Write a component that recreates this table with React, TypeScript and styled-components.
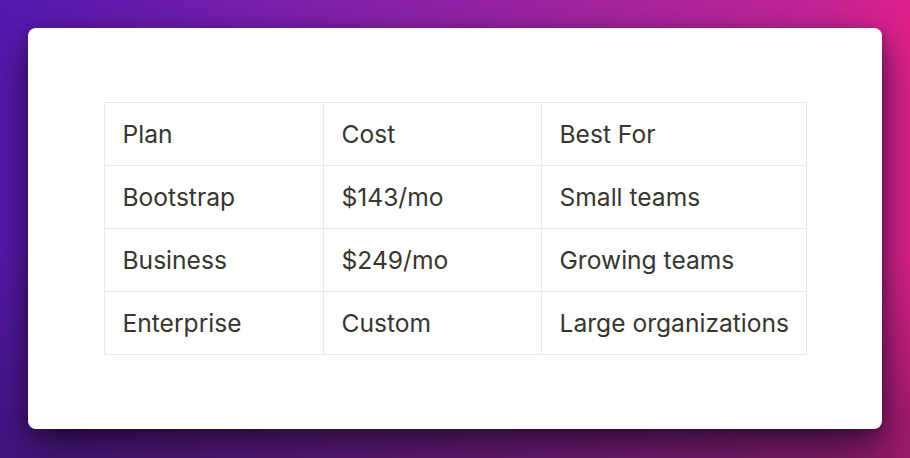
import * as React from 'react';
import styled, { createGlobalStyle } from 'styled-components';

const GlobalStyle = createGlobalStyle`
  html, body {
    margin: 0;
    padding: 0;
  }
  body {
    width: 910px;
    height: 458px;
    overflow: hidden;
    font-family: Inter, "Noto Sans", sans-serif;
  }
`;

const rows = [
  ['Plan', 'Cost', 'Best For'],
  ['Bootstrap', '$143/mo', 'Small teams'],
  ['Business', '$249/mo', 'Growing teams'],
  ['Enterprise', 'Custom', 'Large organizations'],
];

const colWidths = [219, 218, 265];

export default function App() {
  return (
    <>
      <GlobalStyle />
      <Backdrop>
        <Card>
          <Table>
            <colgroup>
              {colWidths.map((w, i) => (
                <col key={i} style={{ width: w }} />
              ))}
            </colgroup>
            <tbody>
              {rows.map((row, r) => (
                <tr key={r}>
                  {row.map((cell, c) => (
                    <Cell key={c}>{cell}</Cell>
                  ))}
                </tr>
              ))}
            </tbody>
          </Table>
        </Card>
      </Backdrop>
    </>
  );
}

const Backdrop = styled.div`
  position: relative;
  width: 910px;
  height: 458px;
  box-sizing: border-box;
  padding: 28px;
  background:
    linear-gradient(180deg, rgba(20, 10, 30, 0) 55%, rgba(30, 12, 40, 0.35) 100%),
    linear-gradient(90deg, #5519b0 0%, #7a1fae 30%, #a3249f 65%, #c42596 90%, #e0218d 100%);
`;

const Card = styled.div`
  width: 854px;
  height: 401px;
  background: #ffffff;
  border-radius: 8px;
  box-shadow: 0 18px 40px rgba(25, 8, 35, 0.75), 0 4px 12px rgba(25, 8, 35, 0.35);
  display: flex;
  align-items: center;
  justify-content: center;
`;

const Table = styled.table`
  border-collapse: collapse;
  table-layout: fixed;
  width: 702px;
`;

const Cell = styled.td`
  border: 1px solid #e9e9e7;
  height: 63px;
  box-sizing: border-box;
  padding: 0 0 0 18px;
  font-size: 24.6px;
  color: #37352f;
  white-space: nowrap;
  vertical-align: middle;
`;
